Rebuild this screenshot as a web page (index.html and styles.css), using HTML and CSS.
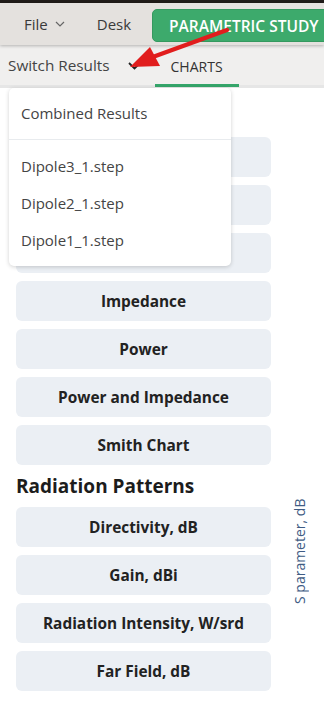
FILE: index.html
```html
<!DOCTYPE html>
<html lang="en">

<head>
    <meta charset="UTF-8">
    <meta name="viewport" content="width=device-width, initial-scale=1.0">
    <title>Charts</title>
    <link rel="stylesheet" href="styles.css">
</head>

<body>

    <div class="strip"></div>

    <header class="topbar">
        <span class="menu">File
            <svg class="caret" width="10" height="6" viewBox="0 0 10 6"><path d="M1 1l4 4 4-4" fill="none" stroke="#666" stroke-width="1.2"/></svg>
        </span>
        <span class="menu desk">Desk</span>
        <button class="study">PARAMETRIC STUDY</button>
    </header>

    <nav class="subbar">
        <span class="switch">Switch Results</span>
        <svg class="chev" width="13" height="8" viewBox="0 0 13 8"><path d="M1 1l5.5 5.5L12 1" fill="none" stroke="#222" stroke-width="1.8"/></svg>
        <span class="tab">CHARTS</span>
    </nav>

    <main class="content">
        <div class="list">
            <!-- first section sits under the open dropdown -->
            <div class="heading-space"></div>
            <button class="chart-btn"></button>
            <button class="chart-btn"></button>
            <button class="chart-btn"></button>
            <button class="chart-btn">Impedance</button>
            <button class="chart-btn">Power</button>
            <button class="chart-btn">Power and Impedance</button>
            <button class="chart-btn">Smith Chart</button>
            <h3>Radiation Patterns</h3>
            <button class="chart-btn">Directivity, dB</button>
            <button class="chart-btn">Gain, dBi</button>
            <button class="chart-btn">Radiation Intensity, W/srd</button>
            <button class="chart-btn">Far Field, dB</button>
        </div>
        <div class="axis"><span>S parameter, dB</span></div>
    </main>

    <div class="dropdown">
        <div class="dd-item">Combined Results</div>
        <div class="dd-sep"></div>
        <div class="dd-item">Dipole3_1.step</div>
        <div class="dd-item">Dipole2_1.step</div>
        <div class="dd-item">Dipole1_1.step</div>
    </div>

    <svg class="arrow" width="324" height="90" viewBox="0 0 324 90">
        <line x1="227" y1="30" x2="150" y2="58" stroke="#e11d1d" stroke-width="4.5" stroke-linecap="round"/>
        <polygon points="130,67 150,47 160,66" fill="#e11d1d"/>
    </svg>

</body>

</html>
```

FILE: styles.css
```css
body {
    font-family: 'Open Sans', sans-serif;
    margin: 0;
    padding: 0;
    background-color: #ffffff;
    width: 324px;
    height: 713px;
    overflow: hidden;
    position: relative;
}

.strip {
    height: 3px;
    background-color: #1f1b18;
}

.topbar {
    height: 42px;
    background-color: #e4e1de;
    display: flex;
    align-items: center;
    box-shadow: 0 1px 3px rgba(0, 0, 0, 0.25);
    position: relative;
    z-index: 1;
    overflow: hidden;
}

.menu {
    font-size: 15px;
    color: #3a3a3a;
    display: flex;
    align-items: center;
    gap: 7px;
}

.menu:first-child {
    margin-left: 24px;
}

.desk {
    margin-left: 32px;
}

.study {
    margin-left: 21px;
    margin-top: 3px;
    height: 33px;
    padding: 0 16px;
    background-color: #3daa6c;
    border: 1px solid #35995f;
    border-radius: 5px 0 0 5px;
    color: #ffffff;
    font-family: 'Open Sans', sans-serif;
    font-size: 15.5px;
    font-weight: 600;
    white-space: nowrap;
    flex-shrink: 0;
}

.subbar {
    height: 40px;
    background-color: #f0efee;
    border-bottom: 3px solid #e6e6e6;
    display: flex;
    align-items: center;
}

.switch {
    margin-left: 8px;
    font-size: 15.3px;
    color: #444;
}

.chev {
    margin-left: 18px;
    margin-top: 2px;
}

.tab {
    margin-left: 14px;
    width: 84px;
    height: 40px;
    box-sizing: border-box;
    display: flex;
    align-items: center;
    justify-content: center;
    font-size: 14px;
    color: #333;
    margin-bottom: -3px;
    border-bottom: 3px solid #35a56a;
    padding-top: 3px;
}

.content {
    display: flex;
}

.list {
    width: 255px;
    margin-left: 16px;
    padding-top: 15px;
    display: flex;
    flex-direction: column;
    gap: 8px;
}

.heading-space {
    height: 26px;
}

.list h3 {
    margin: 0;
    height: 26px;
    line-height: 26px;
    font-size: 19px;
    font-weight: 700;
    color: #1c1c1c;
}

.chart-btn {
    height: 40px;
    border: none;
    border-radius: 6px;
    background-color: #ebeff4;
    font-family: 'Open Sans', sans-serif;
    font-size: 15.4px;
    font-weight: 700;
    color: #222;
}

.axis {
    flex: 1;
    display: flex;
    justify-content: center;
    padding-top: 403px;
    padding-left: 4px;
}

.axis span {
    writing-mode: vertical-rl;
    transform: rotate(180deg);
    font-size: 14px;
    color: #3f5c84;
    height: 113px;
    white-space: nowrap;
}

.dropdown {
    position: absolute;
    top: 88px;
    left: 9px;
    width: 222px;
    background-color: #ffffff;
    border-radius: 5px;
    box-shadow: 0 1px 4px rgba(0, 0, 0, 0.18);
    padding-bottom: 7px;
    z-index: 2;
}

.dd-item {
    padding: 0 12px;
    height: 37px;
    line-height: 37px;
    font-size: 15px;
    color: #444;
}

.dd-item:first-child {
    height: 51px;
    line-height: 51px;
}

.dd-sep {
    height: 1px;
    background-color: #e8ebee;
    margin-bottom: 8px;
}

.arrow {
    position: absolute;
    top: 0;
    left: 0;
    z-index: 3;
}
```
